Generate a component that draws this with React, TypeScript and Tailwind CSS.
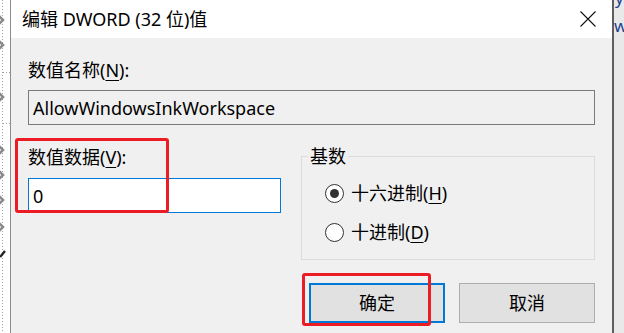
import React from "react";

const font = "font-['Noto_Sans','Noto_Sans_CJK_SC',sans-serif]";

function LeftStrip() {
  const arrows = [20, 45, 97, 150, 175, 200, 227];
  return (
    <div className="relative w-[10px] h-full bg-white shrink-0 overflow-hidden">
      <svg width="10" height="333" className="block">
        <line x1="2.5" y1="0" x2="2.5" y2="333" stroke="#a0a0a0" strokeDasharray="1 2" />
        <line x1="3" y1="72.5" x2="10" y2="72.5" stroke="#a0a0a0" strokeDasharray="1 2" />
        <line x1="3" y1="123.5" x2="10" y2="123.5" stroke="#a0a0a0" strokeDasharray="1 2" />
        {arrows.map((y) => (
          <path key={y} d={`M-1 ${y - 4} L3 ${y} L-1 ${y + 4}`} fill="none" stroke="#8a8a8a" strokeWidth="2.6" />
        ))}
        <path d="M0 257 L5 251" stroke="#222" strokeWidth="2.4" />
      </svg>
    </div>
  );
}

function Radio({ checked, label, u }: { checked: boolean; label: string; u: string }) {
  return (
    <div className="flex items-center h-[24px]">
      <span className="ml-[17px] w-[19px] h-[19px] rounded-full border border-[#333] bg-white flex items-center justify-center">
        {checked && <span className="w-[9px] h-[9px] rounded-full bg-[#333]" />}
      </span>
      <span className="ml-[7px] text-[18px] leading-[24px] text-black">
        {label}(<u className="underline-offset-[3px]">{u}</u>)
      </span>
    </div>
  );
}

export default function App() {
  return (
    <div className={`relative w-[624px] h-[333px] overflow-hidden flex bg-white ${font}`}>
      <LeftStrip />
      <div className="w-[604px] h-full shrink-0 border-l border-[#8c8c8c] border-r-2 border-r-[#5e5e5e] flex flex-col bg-[#f0f0f0]">
        <div className="h-[38px] bg-white flex items-center justify-between pl-[11px] pr-[16px]">
          <span className="text-[18px] leading-[24px] text-black">编辑 DWORD (32 位)值</span>
          <svg width="16" height="16" viewBox="0 0 16 16" className="mt-[-1px]">
            <path d="M0.5 0.5 L15.5 15.5 M15.5 0.5 L0.5 15.5" stroke="#111" strokeWidth="1.1" />
          </svg>
        </div>
        <div className="px-[17px] pt-[20px] flex flex-col">
          <div className="text-[18px] leading-[24px] text-black">
            数值名称(<u className="underline-offset-[3px]">N</u>):
          </div>
          <div className="mt-[8px] h-[35px] border border-[#7a7a7a] bg-[#f0f0f0] flex items-center pl-[4px]">
            <span className="text-[18px] leading-[24px] text-black">AllowWindowsInkWorkspace</span>
          </div>
          <div className="mt-[10px] flex gap-[20px]">
            <div className="w-[253px] flex flex-col pt-[10px]">
              <div className="text-[18px] leading-[24px] text-black">
                数值数据(<u className="underline-offset-[3px]">V</u>):
              </div>
              <div className="mt-[9px] h-[35px] border border-[#0078d7] bg-white flex items-center pl-[4px]">
                <span className="text-[18px] leading-[24px] text-black">0</span>
              </div>
            </div>
            <div className="flex-1 flex flex-col pt-[10px]">
              <fieldset className="h-[115px] border border-[#dcdcdc] px-[6px] pt-[14px]">
                <legend className="px-[2px] text-[18px] leading-[22px] text-black">基数</legend>
                <Radio checked label="十六进制" u="H" />
                <div className="h-[15px]" />
                <Radio checked={false} label="十进制" u="D" />
              </fieldset>
              <div className="mt-[23px] flex justify-between pl-[8px]">
                <button className="w-[136px] h-[40px] border-2 border-[#0078d7] bg-[#e1e1e1] text-[18px] text-black">
                  确定
                </button>
                <button className="w-[136px] h-[40px] border border-[#adadad] bg-[#e1e1e1] text-[18px] text-black">
                  取消
                </button>
              </div>
            </div>
          </div>
        </div>
      </div>
      <div className="relative flex-1 h-full bg-[#e9e9e9] overflow-hidden">
        <div className="absolute left-[1px] top-[-14px] text-[17px] leading-[24px] text-[#1f3f8f]">y</div>
        <div className="absolute left-[0px] top-[14px] text-[17px] leading-[24px] text-[#1f3f8f]">w</div>
      </div>
      <div className="absolute left-[15px] top-[138px] w-[154px] h-[75px] border-[3px] border-[#ec1c24] rounded-[3px]" />
      <div className="absolute left-[302px] top-[273px] w-[129px] h-[53px] border-[3px] border-[#ec1c24] rounded-[3px]" />
    </div>
  );
}
